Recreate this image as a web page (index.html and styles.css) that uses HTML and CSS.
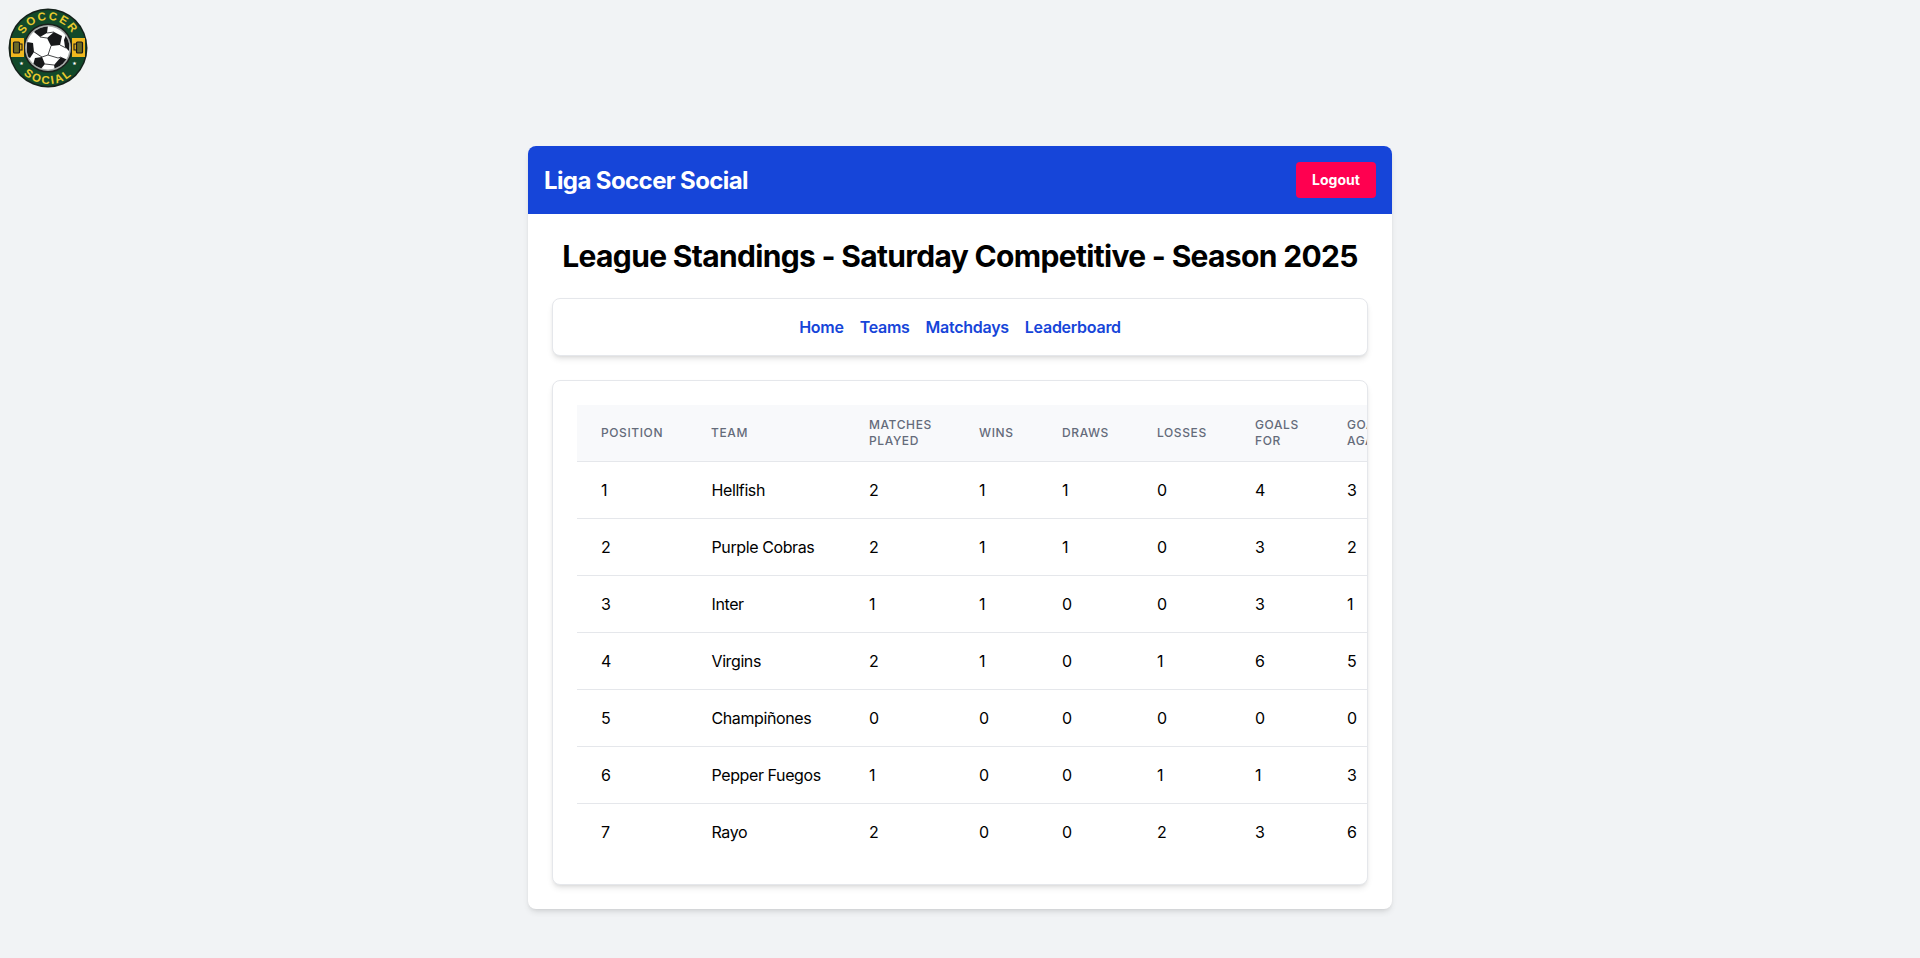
FILE: index.html
```html
<!DOCTYPE html>
<html lang="en">
<head>
  <meta charset="UTF-8">
  <meta name="viewport" content="width=device-width, initial-scale=1.0">
  <title>Liga Soccer Social</title>
  <link rel="stylesheet" href="styles.css">
</head>

<body>
  <!-- Logo -->
  <svg class="logo" viewBox="0 0 80 80" role="img" aria-label="Soccer Social">
    <defs>
      <path id="arc-top" d="M 12 40 A 28 28 0 0 1 68 40"/>
      <path id="arc-bottom" d="M 4 40 A 36 36 0 0 0 76 40"/>
      <clipPath id="ball-clip"><circle cx="40" cy="40" r="21.5"/></clipPath>
    </defs>
    <rect width="80" height="80" fill="#f1f3f4"/>
    <circle cx="40" cy="40" r="39.5" fill="#14201a"/>
    <circle cx="40" cy="40" r="38" fill="#12492a"/>
    <circle cx="40" cy="40" r="24.5" fill="#1a1f1c"/>
    <circle cx="40" cy="40" r="23" fill="#a9adab"/>
    <circle cx="40" cy="40" r="21.5" fill="#fff"/>
    <g clip-path="url(#ball-clip)" fill="#17181a">
      <polygon points="46,24 54,28 52,37 43,38 39,30"/>
      <polygon points="28,18 40,17 39,25 32,29 26,24"/>
      <polygon points="19,34 25,35 26,44 22,50 18,48"/>
      <polygon points="27,50 34,49 37,56 32,62 25,57"/>
      <polygon points="46,57 53,49 60,52 56,62 47,63"/>
      <polygon points="58,27 62,33 61,43 57,39 56,32"/>
    </g>
    <g fill="none" stroke="#17181a" stroke-width=".8" clip-path="url(#ball-clip)">
      <path d="M39 30 32 29M43 38 40 47 34 49M40 47 50 50 53 49M52 37 58 40M26 44 34 49M46 57 37 56M39 25 46 24"/>
    </g>
    <rect x="3" y="30" width="13" height="19" fill="#efb81f"/>
    <rect x="64" y="30" width="13" height="19" fill="#efb81f"/>
    <g fill="#6b6a26" stroke="#17181a" stroke-width="1.2">
      <rect x="5.5" y="34" width="6" height="11" rx="1"/>
      <rect x="68.5" y="34" width="6" height="11" rx="1"/>
    </g>
    <g fill="none" stroke="#17181a" stroke-width="1.1">
      <path d="M11.5 36h2.5v6h-2.5"/>
      <path d="M68.5 36h-2.5v6h2.5"/>
    </g>
    <text class="logo-text"><textPath href="#arc-top" startOffset="50%" text-anchor="middle">SOCCER</textPath></text>
    <text class="logo-text"><textPath href="#arc-bottom" startOffset="50%" text-anchor="middle">SOCIAL</textPath></text>
    <text class="logo-star" x="13.5" y="57" text-anchor="middle">★</text>
    <text class="logo-star" x="66.5" y="57" text-anchor="middle">★</text>
  </svg>

  <div class="container">
    <header class="top-bar">
      <span class="brand">Liga Soccer Social</span>
      <button class="logout-btn" type="button">Logout</button>
    </header>

    <main class="content">
      <h1>League Standings - Saturday Competitive - Season 2025</h1>

      <!-- Navigazione -->
      <nav class="panel nav-panel">
        <a href="#">Home</a>
        <a href="#">Teams</a>
        <a href="#">Matchdays</a>
        <a href="#">Leaderboard</a>
      </nav>

      <!-- Classifica -->
      <section class="panel table-panel">
        <div class="table-wrap">
          <table class="standings">
            <colgroup>
              <col class="col-pos"><col class="col-team"><col class="col-played"><col class="col-wins">
              <col class="col-draws"><col class="col-losses"><col class="col-gf"><col class="col-ga">
              <col class="col-gd"><col class="col-pts">
            </colgroup>
            <thead>
              <tr>
                <th>Position</th><th>Team</th><th>Matches Played</th><th>Wins</th><th>Draws</th>
                <th>Losses</th><th>Goals For</th><th>Goals Against</th><th>Goal Difference</th><th>Points</th>
              </tr>
            </thead>
            <tbody>
              <tr><td>1</td><td>Hellfish</td><td>2</td><td>1</td><td>1</td><td>0</td><td>4</td><td>3</td><td>1</td><td>4</td></tr>
              <tr><td>2</td><td>Purple Cobras</td><td>2</td><td>1</td><td>1</td><td>0</td><td>3</td><td>2</td><td>1</td><td>4</td></tr>
              <tr><td>3</td><td>Inter</td><td>1</td><td>1</td><td>0</td><td>0</td><td>3</td><td>1</td><td>2</td><td>3</td></tr>
              <tr><td>4</td><td>Virgins</td><td>2</td><td>1</td><td>0</td><td>1</td><td>6</td><td>5</td><td>1</td><td>3</td></tr>
              <tr><td>5</td><td>Champiñones</td><td>0</td><td>0</td><td>0</td><td>0</td><td>0</td><td>0</td><td>0</td><td>0</td></tr>
              <tr><td>6</td><td>Pepper Fuegos</td><td>1</td><td>0</td><td>0</td><td>1</td><td>1</td><td>3</td><td>-2</td><td>0</td></tr>
              <tr><td>7</td><td>Rayo</td><td>2</td><td>0</td><td>0</td><td>2</td><td>3</td><td>6</td><td>-3</td><td>0</td></tr>
            </tbody>
          </table>
        </div>
      </section>
    </main>
  </div>
</body>
</html>
```

FILE: styles.css
```css
/* Stile generale */
body {
  font-family: Inter, "Liberation Sans", sans-serif;
  background-color: #f1f3f5;
  color: #000;
  margin: 0;
  padding: 8px;
}

.logo {
  display: block;
  width: 80px;
  height: 80px;
}

.logo-text {
  font-family: "Liberation Sans", sans-serif;
  font-size: 11.5px;
  font-weight: 700;
  letter-spacing: 1.8px;
  fill: #e8c92e;
}

.logo-star {
  font-family: "DejaVu Sans", sans-serif;
  font-size: 5px;
  fill: #fff;
}

.container {
  width: 864px;
  margin: 58px auto 0;
  background-color: #fff;
  border-radius: 8px;
  box-shadow: 0 4px 6px -1px rgba(0, 0, 0, 0.1), 0 2px 4px -2px rgba(0, 0, 0, 0.1);
  overflow: hidden;
}

/* Barra superiore */
.top-bar {
  display: flex;
  justify-content: space-between;
  align-items: center;
  height: 68px;
  padding: 0 16px;
  background-color: #1645d9;
  color: #fff;
}

.brand {
  padding-top: 2px;
  font-size: 24px;
  font-weight: 700;
  line-height: 32px;
  letter-spacing: -0.6px;
}

.logout-btn {
  width: 80px;
  height: 36px;
  padding: 0 0 2px;
  border: none;
  border-radius: 4px;
  background-color: #ff0050;
  color: #fff;
  font-family: inherit;
  font-size: 14px;
  font-weight: 700;
  cursor: pointer;
}

.content {
  padding: 24px;
}

h1 {
  margin: 0 0 24px;
  font-size: 30px;
  font-weight: 700;
  line-height: 36px;
  letter-spacing: -0.67px;
  text-align: center;
}

.panel {
  border: 1px solid #e5e7eb;
  border-radius: 8px;
  background-color: #fff;
  box-shadow: 0 4px 6px -1px rgba(0, 0, 0, 0.1), 0 2px 4px -2px rgba(0, 0, 0, 0.1);
}

/* Navigazione */
.nav-panel {
  display: flex;
  justify-content: center;
  gap: 16px;
  padding: 16px;
  margin-bottom: 24px;
}

.nav-panel a {
  color: #1645d9;
  font-size: 16px;
  font-weight: 600;
  line-height: 24px;
  letter-spacing: -0.27px;
  text-decoration: none;
}

/* Tabella */
.table-panel {
  padding: 24px 0 24px 24px;
}

.table-wrap {
  overflow: hidden;
}

.standings {
  width: 1010px;
  table-layout: fixed;
  border-collapse: collapse;
}

.col-pos { width: 110px; }
.col-team { width: 158px; }
.col-played { width: 110px; }
.col-wins { width: 83px; }
.col-draws { width: 95px; }
.col-losses { width: 98px; }
.col-gf { width: 92px; }
.col-ga { width: 92px; }
.col-gd { width: 92px; }
.col-pts { width: 80px; }

.standings th {
  padding: 12px 24px;
  background-color: #f8f9fb;
  border-bottom: 1px solid #e5e7eb;
  color: #646b7a;
  font-size: 12px;
  font-weight: 500;
  line-height: 16px;
  letter-spacing: 0.05em;
  text-align: left;
  text-transform: uppercase;
}

.standings td {
  padding: 16px 24px;
  border-bottom: 1px solid #e5e7eb;
  font-size: 16px;
  line-height: 24px;
  letter-spacing: -0.4px;
  white-space: nowrap;
}

.standings tbody tr:last-child td {
  border-bottom: none;
}

.standings td:nth-child(2) {
  padding-left: 24.5px;
}
```
